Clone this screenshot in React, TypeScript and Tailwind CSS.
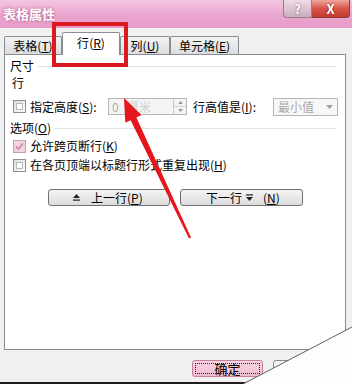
import React from "react";

const U = ({ c }: { c: string }) => (
  <span>
    (<span className="underline underline-offset-1">{c}</span>)
  </span>
);

const Box = ({ checked }: { checked?: boolean }) => (
  <div
    className={
      checked
        ? "w-[13px] h-[13px] border border-[#c8a0b0] bg-[#f3d3df] flex items-center justify-center shrink-0"
        : "w-[13px] h-[13px] border border-[#8f8f8f] bg-gradient-to-br from-[#dcdcdc] to-[#ffffff] p-[2px] shrink-0"
    }
  >
    {checked ? (
      <svg width="9" height="9" viewBox="0 0 9 9">
        <path d="M1 4.5 L3.5 7 L8 1.5" stroke="#d58aa6" strokeWidth="1.8" fill="none" />
      </svg>
    ) : (
      <div className="w-full h-full border border-[#b8b8b8] bg-white" />
    )}
  </div>
);

const Tab = ({ w, children }: { w: string; children: React.ReactNode }) => (
  <div
    className={`${w} h-[18px] border border-b-0 border-[#898c95] rounded-t-[2px] bg-gradient-to-b from-[#f4f4f4] to-[#dcdcdc] flex items-center justify-center text-[12px] leading-none`}
  >
    {children}
  </div>
);

export default function App() {
  return (
    <div
      className="w-[352px] h-[384px] relative overflow-hidden bg-[#f0f0f0] text-black"
      style={{ fontFamily: '"Noto Sans CJK SC", "Noto Sans", sans-serif' }}
    >
      {/* Title bar */}
      <div className="h-[28px] flex items-start justify-between bg-gradient-to-b from-[#f3c6e0] via-[#eaa6cf] to-[#e79cc8]">
        <div
          className="pl-[3px] pt-[6px] text-[13px] leading-[15px] font-bold text-white"
          style={{ textShadow: "0 0 3px #b0507f" }}
        >
          表格属性
        </div>
        <div className="flex mr-[2px]">
          <div className="w-[29px] h-[18px] rounded-bl-[4px] border border-t-0 border-[#9b7b8c] bg-gradient-to-b from-[#f0dce6] to-[#c9aebd] flex items-center justify-center text-[13px] font-bold leading-none text-white" style={{ textShadow: "0 0 2px #6a4a5a" }}>
            ?
          </div>
          <div className="w-[38px] h-[18px] rounded-br-[4px] border border-l-0 border-t-0 border-[#8a3a30] bg-gradient-to-b from-[#eba59c] via-[#d7544a] to-[#c33a2c] flex items-center justify-center text-[13px] font-bold leading-none text-white" style={{ textShadow: "0 0 2px #6a1a10" }}>
            X
          </div>
        </div>
      </div>

      {/* Body */}
      <div className="pl-[4px] w-[346px]">
        <div className="h-[26px] flex items-end">
          <Tab w="w-[58px]">
            表格<U c="T" />
          </Tab>
          <div className="w-[58px] h-[23px] -mb-px relative z-10 border border-b-0 border-[#898c95] rounded-t-[2px] bg-white flex items-center justify-center text-[12px] leading-none pb-[2px]">
            行<U c="R" />
          </div>
          <Tab w="w-[50px]">
            列<U c="U" />
          </Tab>
          <Tab w="w-[69px]">
            单元格<U c="E" />
          </Tab>
        </div>
        <div className="h-[296px] border border-[#898c95] bg-white pl-[5px] text-[12px] leading-[14px]">
          <div className="mt-[4px] flex items-center gap-[4px] mr-[9px]">
            <span>尺寸</span>
            <div className="flex-1 h-px bg-[#dde3e8]" />
          </div>
          <div className="mt-[3px] ml-[2px]">行</div>
          <div className="mt-[8px] h-[17px] flex items-center">
            <div className="ml-[3px]">
              <Box />
            </div>
            <span className="ml-[4px] w-[72px] whitespace-nowrap">
              指定高度<U c="S" />:
            </span>
            <div className="ml-[6px] h-[17px] w-[79px] border border-[#b5b5b5] bg-[#f4f4f4] flex items-center">
              <span className="pl-[3px] text-[#b0b0b0] w-[18px]">0</span>
              <span className="text-[#d0d0d0]">厘米</span>
              <div className="ml-auto w-[13px] h-full border-l border-[#c8c8c8] flex flex-col">
                <div className="flex-1 flex items-center justify-center border-b border-[#d0d0d0]">
                  <svg width="5" height="3" viewBox="0 0 5 3"><path d="M0 3 L2.5 0 L5 3Z" fill="#9a9a9a" /></svg>
                </div>
                <div className="flex-1 flex items-center justify-center">
                  <svg width="5" height="3" viewBox="0 0 5 3"><path d="M0 0 L2.5 3 L5 0Z" fill="#9a9a9a" /></svg>
                </div>
              </div>
            </div>
            <span className="ml-[6px] w-[72px] whitespace-nowrap">
              行高值是<U c="I" />:
            </span>
            <div className="ml-[8px] h-[18px] w-[65px] border border-[#b5b5b5] bg-[#f7f7f7] flex items-center">
              <span className="pl-[4px] text-[#a8a8a8]">最小值</span>
              <div className="ml-auto mr-[4px]">
                <svg width="7" height="4" viewBox="0 0 7 4"><path d="M0 0 L3.5 4 L7 0Z" fill="#a0a0a0" /></svg>
              </div>
            </div>
          </div>
          <div className="mt-[6px] flex items-center gap-[4px] mr-[9px]">
            <span>
              选项<U c="O" />
            </span>
            <div className="flex-1 h-px bg-[#dde3e8]" />
          </div>
          <div className="mt-[4px] h-[14px] flex items-center">
            <div className="ml-[3px]">
              <Box checked />
            </div>
            <span className="ml-[4px]">
              允许跨页断行<U c="K" />
            </span>
          </div>
          <div className="mt-[5px] h-[14px] flex items-center">
            <div className="ml-[3px]">
              <Box />
            </div>
            <span className="ml-[4px]">
              在各页顶端以标题行形式重复出现<U c="H" />
            </span>
          </div>
          <div className="mt-[17px] ml-[38px] flex gap-[10px]">
            <div className="w-[122px] h-[17px] rounded-[3px] border border-[#707070] bg-gradient-to-b from-[#f4f4f4] to-[#dcdcdc] flex items-center">
              <svg className="ml-[24px]" width="7" height="7" viewBox="0 0 7 7">
                <path d="M3.5 0 L7 4 L0 4Z" fill="#222" />
                <rect x="0" y="5.5" width="7" height="1.2" fill="#222" />
              </svg>
              <span className="ml-[11px]">
                上一行<U c="P" />
              </span>
            </div>
            <div className="w-[123px] h-[17px] rounded-[3px] border border-[#707070] bg-gradient-to-b from-[#f4f4f4] to-[#dcdcdc] flex items-center">
              <span className="ml-[25px]">下一行</span>
              <svg className="ml-[4px]" width="7" height="7" viewBox="0 0 7 7">
                <rect x="0" y="0.3" width="7" height="1.2" fill="#222" />
                <path d="M0 3 L7 3 L3.5 7Z" fill="#222" />
              </svg>
              <span className="ml-[10px]">
                <U c="N" />
              </span>
            </div>
          </div>
        </div>
      </div>

      {/* Footer */}
      <div className="mt-[10px] pl-[192px] flex gap-[10px] text-[12px]">
        <div className="w-[71px] h-[17px] rounded-[3px] border border-[#c77e9e] bg-gradient-to-b from-[#f7d6e2] to-[#eebccf] p-[2px]">
          <div className="w-full h-full border border-dotted border-[#222] flex items-center justify-center leading-none text-[13px]">
            确定
          </div>
        </div>
        <div className="w-[71px] h-[17px] rounded-[3px] border border-[#8a8a8a] bg-[#f4f4f4]" />
      </div>

      {/* Bottom dark edge */}
      <div className="absolute left-0 bottom-0 w-full h-[2px] bg-[#1e1e1e]" />

      {/* Page curl */}
      <svg className="absolute left-0 top-0" width="352" height="384" viewBox="0 0 352 384">
        <polygon points="352,327 352,384 243,384" fill="#fdfdfd" />
        <line x1="352" y1="327" x2="243" y2="384" stroke="#606060" strokeWidth="1" />
      </svg>

      {/* Red highlight rectangle */}
      <div className="absolute left-[52px] top-[22px] w-[76px] h-[45px] border-[4px] border-[#dc1820]" />

      {/* Red arrow */}
      <svg className="absolute left-0 top-0" width="352" height="384" viewBox="0 0 352 384">
        <polygon
          points="124,98 141.5,114.9 136.4,117.4 191,237.6 189,238.4 130.6,120.2 125.3,122.7"
          fill="#e5161e"
        />
      </svg>
    </div>
  );
}
